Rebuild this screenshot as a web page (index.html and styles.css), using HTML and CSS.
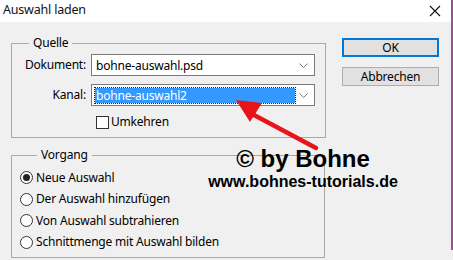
FILE: index.html
```html
<!DOCTYPE html>
<html lang="de">
<head>
<meta charset="utf-8">
<link rel="stylesheet" href="styles.css">
</head>
<body>
<div class="window">
  <div class="titlebar">
    <span class="title">Auswahl laden</span>
    <svg class="close" width="12" height="12" viewBox="0 0 12 12"><path d="M1 1L11 11M11 1L1 11" stroke="#111" stroke-width="1.1" fill="none"/></svg>
  </div>
  <div class="content">
    <div class="left">
      <fieldset class="group quelle">
        <legend>Quelle</legend>
        <div class="form">
          <span class="lbl">Dokument:</span>
          <div class="combo"><span class="val">bohne-auswahl.psd</span><svg class="chev" width="9" height="5" viewBox="0 0 9 5"><path d="M0.5 0.5L4.5 4.5L8.5 0.5" stroke="#777" fill="none"/></svg></div>
          <span class="lbl">Kanal:</span>
          <div class="combo"><span class="val sel">bohne-auswahl2</span><svg class="chev" width="9" height="5" viewBox="0 0 9 5"><path d="M0.5 0.5L4.5 4.5L8.5 0.5" stroke="#777" fill="none"/></svg></div>
          <span></span>
          <label class="check"><span class="box"></span>Umkehren</label>
        </div>
      </fieldset>
      <fieldset class="group vorgang">
        <legend>Vorgang</legend>
        <div class="radio"><span class="circ on"></span>Neue Auswahl</div>
        <div class="radio"><span class="circ"></span>Der Auswahl hinzufügen</div>
        <div class="radio"><span class="circ"></span>Von Auswahl subtrahieren</div>
        <div class="radio"><span class="circ"></span>Schnittmenge mit Auswahl bilden</div>
      </fieldset>
    </div>
    <div class="right">
      <div class="btn default">OK</div>
      <div class="btn">Abbrechen</div>
    </div>
  </div>
  <div class="mark">
    <div class="mark1">© by Bohne</div>
    <div class="mark2">www.bohnes-tutorials.de</div>
  </div>
  <svg class="arrow" width="100" height="60" viewBox="0 0 100 60">
    <path d="M86 53L24 20" stroke="#e8141a" stroke-width="4.5" stroke-linecap="round"/>
    <path d="M6 5L32 8L20 27Z" fill="#e8141a"/>
  </svg>
  <div class="edge"></div>
</div>
</body>
</html>
```
FILE: styles.css
```css
html, body {
  margin: 0;
  padding: 0;
  background: #f0f0f0;
}
.window {
  position: relative;
  width: 453px;
  height: 260px;
  background: #f0f0f0;
  font-family: "Noto Sans", "Open Sans", sans-serif;
  font-size: 12px;
  letter-spacing: -0.2px;
  color: #000;
  overflow: hidden;
}
.titlebar {
  height: 22px;
  background: #fff;
  display: flex;
  align-items: center;
  justify-content: space-between;
  padding: 0 10px 0 3px;
  width: 438px;
}
.title {
  font-size: 12.5px;
  color: #111;
  line-height: 22px;
  margin-top: -2px;
}
.close {
  margin-top: -1px;
}
.content {
  display: flex;
  gap: 16px;
  padding-left: 11px;
}
.left {
  width: 315px;
}
.group {
  margin: 0;
  border: 1px solid #a9a9a9;
  padding: 0;
}
.group legend {
  margin-left: 17px;
  padding: 0 4px;
  line-height: 16px;
  height: 16px;
}
.quelle {
  margin-top: 13px;
  padding: 3px 9px 8px 0;
}
.form {
  display: grid;
  grid-template-columns: 74px 224px;
  column-gap: 5px;
  row-gap: 8px;
  align-items: center;
}
.lbl {
  text-align: right;
  line-height: 16px;
}
.combo {
  height: 20px;
  border: 1px solid #7a7a7a;
  background: #fff;
  display: flex;
  align-items: center;
  justify-content: space-between;
  padding: 0 6px 0 3px;
}
.val {
  line-height: 15px;
  padding: 0 1px;
  white-space: nowrap;
}
.sel {
  background: #3399ff;
  color: #fff;
  width: 198px;
  outline: 1px dotted #222;
  outline-offset: 0;
  height: 15px;
}
.check {
  display: flex;
  align-items: center;
  gap: 2px;
  margin-left: 5px;
  margin-top: 1px;
  line-height: 14px;
}
.box {
  width: 11px;
  height: 11px;
  border: 1px solid #333;
  background: #fff;
}
.vorgang {
  margin-top: 9px;
  padding: 4px 0 4px 8px;
  width: 304px;
}
.radio {
  display: flex;
  align-items: center;
  gap: 3px;
  height: 21.5px;
  line-height: 16px;
}
.circ {
  width: 11px;
  height: 11px;
  border: 1px solid #333;
  border-radius: 50%;
  background: #fff;
  display: flex;
  align-items: center;
  justify-content: center;
}
.circ.on::after {
  content: "";
  width: 7px;
  height: 7px;
  border-radius: 50%;
  background: #222;
}
.right {
  padding-top: 16px;
  display: flex;
  flex-direction: column;
  gap: 10px;
}
.btn {
  width: 95px;
  height: 17px;
  border: 1px solid #adadad;
  background: #e1e1e1;
  text-align: center;
  line-height: 17px;
}
.btn.default {
  width: 93px;
  height: 15px;
  border: 2px solid #0078d7;
  line-height: 15px;
}
.mark {
  position: absolute;
  left: 203px;
  top: 146px;
  width: 200px;
  text-align: center;
  font-family: "Liberation Sans", Arial, sans-serif;
  font-weight: bold;
  letter-spacing: 0;
  color: #000;
}
.mark1 {
  font-size: 24px;
  line-height: 26px;
}
.mark2 {
  font-size: 16px;
  line-height: 20px;
}
.arrow {
  position: absolute;
  left: 230px;
  top: 95px;
}
.edge {
  position: absolute;
  right: 0;
  top: 0;
  width: 2px;
  height: 250px;
  background: #97528f;
}
```
